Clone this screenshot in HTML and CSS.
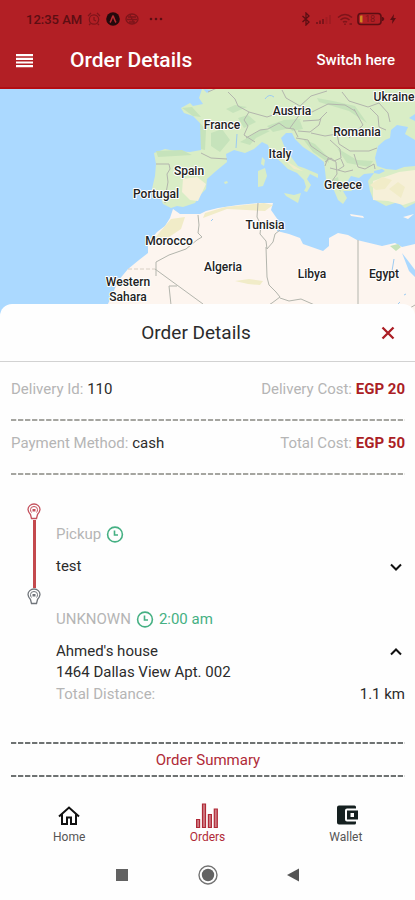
FILE: index.html
```html
<!DOCTYPE html>
<html lang="en">
<head>
  <meta charset="UTF-8" />
  <meta name="viewport" content="width=device-width, initial-scale=1" />
  <title>Order Details</title>
  <link rel="stylesheet" href="styles.css">
</head>
<body>

<div class="screen">
  <header class="header">
    <!-- phone status -->
    <div class="status">
      <div class="status-side">
        <span class="clock">12:35 AM</span>
        <svg class="faint" width="14" height="14" viewBox="0 0 14 14" fill="none" stroke="currentColor" stroke-width="1.2"><circle cx="7" cy="7.5" r="4.7"/><path d="M7 5v3l2 1M1 4l3-3M13 4l-3-3M3.500 11.500L2 13M10.500 11.500L12 13"/></svg>
        <svg width="14" height="14" viewBox="0 0 14 14"><circle cx="7" cy="7" r="6.800" fill="#24090c"/><path d="M4 10.500C5.500 8.500 6 5 7 4c1 1 1.500 4.500 3 6.500" fill="none" stroke="#b52b31" stroke-width="1.600"/></svg>
        <svg class="faint" width="14" height="14" viewBox="0 0 14 14" fill="none" stroke="currentColor" stroke-width="1.300"><ellipse cx="7" cy="7" rx="6" ry="5"/><path d="M3 5h8M2 7.500h10M4 10h6M5 3l4 8"/></svg>
        <svg class="more" width="16" height="14" viewBox="0 0 16 14" fill="currentColor"><circle cx="3" cy="7" r="1.300"/><circle cx="8" cy="7" r="1.300"/><circle cx="13" cy="7" r="1.300"/></svg>
      </div>
      <div class="status-side status-right">
        <svg width="10" height="14" viewBox="0 0 10 14" fill="none" stroke="currentColor" stroke-width="1.300"><path d="M1.500 4l6.500 6-3 3V1l3 3-6.500 6"/></svg>
        <svg class="faint" width="18" height="14" viewBox="0 0 18 14" fill="currentColor"><path d="M1 12V10h2v2zM4 12V8.500h2V12zM7 12V7h2v5z"/><path d="M10.500 12V5h2v7zM14 12V3h2v9z" opacity=".3"/></svg>
        <svg class="faint" width="16" height="14" viewBox="0 0 16 14" fill="none" stroke="currentColor" stroke-width="1.500"><path d="M1 5.500q7-6 14 0M3.500 8q4.500-4 9 0M6 10.200q2-1.600 4 0"/><path d="M12.500 12h2.500M8 11.500v1.500"/></svg>
        <svg width="28" height="14" viewBox="0 0 28 14"><rect x="1" y="1.500" width="23" height="11" rx="3" fill="none" stroke="#5c0e13" stroke-width="1.600"/><path d="M25.500 5v4l1.500-2z" fill="#5c0e13" stroke="#5c0e13"/><path d="M4 3.500h1.500v7H4q-1 0-1-1v-5q0-1 1-1z" fill="#cf8a22"/><text x="8" y="10" class="charge">18</text></svg>
        <svg width="8" height="14" viewBox="0 0 8 14" fill="currentColor"><path d="M5 2L1 8h2.500L3 12l4-6H4.500z"/></svg>
      </div>
    </div>

    <div class="toolbar">
      <button class="menu" type="button" aria-label="Menu">
        <svg width="18" height="14" viewBox="0 0 18 14" fill="#fff"><path d="M0 0h17v2.200H0zM0 3.700h17v2.200H0zM0 7.400h17v2.200H0zM0 11.100h17v2.200H0z"/></svg>
      </button>
      <h1>Order Details</h1>
      <a class="switch" href="#">Switch here</a>
    </div>
  </header>

  <!-- map -->
  <div class="map">
    <svg viewBox="0 88 415 227" preserveAspectRatio="xMidYMin slice">
      <!-- europe -->
      <path class="europe" d="M415 88H202L199 97 203 103 193 105 190 102 181 107 184 112 193 115 200 122 203 129 203 138 201 149 190 151 175 150 165 148 154 152 156 163 155 175 152 188 153 195 160 195 163 203 171 207 177 205 183 206 195 202 200 194 206 188 207 178 216 170 227 161 226 153 234 149 245 152 254 148 262 141 268 144 271 153 281 161 288 168 297 172 304 179 306 186 304 190 307 191 311 184 307 178 310 173 318 177 318 173 304 167 298 165 292 157 285 147 281 137 286 132 292 132 295 138 303 146 315 154 324 161 326 178 333 187 338 199 343 203 347 197 343 190 352 190 347 181 351 175 359 177 364 173 374 172 368 180 370 190 373 198 386 205 398 201 405 207 415 202z"/>
      <path class="europe" d="M262 156l3 3-1 6-3-2zM258 170l7-3 2 8-4 10-5 1zM284 192l10 2 7-2-3 10-12-7zM224 181l3-1 1 2-3 1z"/>
      <path class="land" d="M350 213l13 2 1 2-13-2zM403 216l11-3-6 5z"/>

      <!-- africa -->
      <path class="land" d="M107 305L113 292 118 280 128 268 139 259 148 252 148 242 157 231 165 225 170 217 173 208 180 213 200 213 206 210 218 207 238 204 258 202 273 202 271 209 278 219 277 230 289 233 300 237 303 243 323 250 329 245 329 237 338 232 348 234 357 239 382 245 395 242 402 246 415 243V316H107z"/>

      <!-- vegetation and dry ground -->
      <path class="forest" d="M182 107l10-1 9 10-8-1zM200 122l6 7-1 20-4-1zM211 132l11-4 8 11-10 12-9-6zM156 150l26-1 10 5-34 2zM226 108l9-4 12 2-14 6zM238 117l10-3 8 7-12 6zM247 137l15-9 8 2-14 7-6 7-10-3zM267 125l17-6 17-1-7 8-21 5zM288 123l12-3 3 8-11 2zM317 97l16 3 22 5 12 17-18-12-30-9zM303 138l12 5 12 12 2 7-16-11zM337 147l20 12 16 1-4 6-22-4zM333 178l5-2 3 15-6-5zM390 245l8-2 3 3-5 4z"/>
      <path class="dry" d="M183 178l14-2 9 7-8 17-8-1-8-8zM373 180l26-9 16-2v31l-12 4-15-4-15-1z"/>
      <path class="beach" d="M171 218l14-2-4 12-18 12-10-1zM205 212l20-6 39-4 9 2-8 6-38-2-24 9zM235 280l14-2 14 2-3 4-12-1zM279 154l12 9 12 7-9-2zM370 184l12-8 10 3-7 9-9 1zM389 188l9-7 7 5-4 11z"/>

      <!-- black sea, marmara, red sea -->
      <path class="water" d="M415 165L404 166 396 169 386 168 377 165 375 157 378 145 385 139 390 137 391 129 397 124 408 126 405 133 415 139zM374 170l8-2 3 2-6 3-5-1zM402 252l7 9 6 8v7l-6-6zM409 117l6-4v7zM203 88l8 1-4 3z"/>
      <path class="river" d="M236 147l1-14M211 220l2-2M404 294l2-1M397 304l3-3M392 270l2-12M265 98q4-6 9-2"/>

      <!-- borders -->
      <path class="border" d="M156 163h13l1 5-3 5 1 8-2 11-1 10M201 152l10 5 16 1M228 91l7 7 3 7 11 6-5 8 4 6-4 9 11 7M246 137l14-8 8-1 11-6 7 5 8 1 4 8M249 111l18 5 21-7 12 4-10 14M282 89l4 8 14 8 11-10 16-5M305 107l7 4 16-8 17 1 10 6M303 120l16-1 8-8M298 130l12 1 9-7 2-7M296 137l12 2 3 6 13 9 7 4M311 132l14 3 12-2 2 10 11 7 19 0 8-3M330 139l10 9 1 9-7 3-6-3-3 8M341 158l3 7-6 4-8-2M338 169l7 2 8-2M354 153l4 13 7 2 9-5 1 5M342 91l7 9 19 6 11-4 9 10 2 9M370 107l8 8 1 11 7 3M354 108l9 16-14 13M208 91l9-4M325 161l6-4 5 4 1 12-5 7"/>
      <path class="border" d="M198 214l1 10-1 8 4 4-5 3-11 9-17 6-13 7v14M155 268l48 35M177 285h-8l2 19M258 202l-1 14 4 8-1 9 6 7 1 8 6-7 2-8 5-4M266 246l1 30 2 8 7 7 4 5-8 6-5 3M280 297l9 3 12-2 16 7M358 239v66M415 304l-5 3"/>
      <path class="border disputed" d="M128 268h27"/>

      <g class="labels">
        <text x="222" y="128">France</text>
        <text x="292" y="114">Austria</text>
        <text x="394" y="100">Ukraine</text>
        <text x="357" y="135">Romania</text>
        <text x="280" y="157">Italy</text>
        <text x="189" y="174">Spain</text>
        <text x="343" y="188">Greece</text>
        <text x="156" y="197">Portugal</text>
        <text x="265" y="228">Tunisia</text>
        <text x="169" y="244">Morocco</text>
        <text x="223" y="270">Algeria</text>
        <text x="312" y="277">Libya</text>
        <text x="384" y="277">Egypt</text>
        <text x="128" y="285">Western</text>
        <text x="128" y="300">Sahara</text>
      </g>
    </svg>
  </div>

  <main class="sheet">
    <div class="sheet-head">
      <h2>Order Details</h2>
      <button class="close" type="button" aria-label="Close">
        <svg width="14" height="14" viewBox="0 0 14 14" fill="none" stroke="#ab1e25" stroke-width="2.300"><path d="M1.500 1.500l11 11M12.500 1.500l-11 11"/></svg>
      </button>
    </div>

    <div class="info">
      <p><span>Delivery Id:</span> 110</p>
      <p><span>Delivery Cost:</span> <b>EGP 20</b></p>
    </div>
    <div class="info">
      <p><span>Payment Method:</span> cash</p>
      <p><span>Total Cost:</span> <b>EGP 50</b></p>
    </div>

    <section class="route">
      <div class="track">
        <svg class="pin pin-start" width="14" height="17" viewBox="0 0 14 17" fill="none" stroke="currentColor"><path d="M4.500 15.500L3.500 11.500Q1 8.500 1 6.500a6 5.500 0 0 1 12 0q0 2-2.500 5l-1 4z" stroke-width="1.300"/><path d="M4.500 9.500q-1-1-1-3a3.500 3 0 0 1 7 0q0 2-1 3"/><path d="M5.500 6h3v2.500h-3z" fill="currentColor" stroke="none"/></svg>
        <div class="line"></div>
        <svg class="pin" width="14" height="17" viewBox="0 0 14 17" fill="none" stroke="currentColor"><path d="M4.500 15.500L3.500 11.500Q1 8.500 1 6.500a6 5.500 0 0 1 12 0q0 2-2.500 5l-1 4z" stroke-width="1.300"/><path d="M4.500 9.500q-1-1-1-3a3.500 3 0 0 1 7 0q0 2-1 3"/><path d="M5.500 6h3v2.500h-3z" fill="currentColor" stroke="none"/></svg>
      </div>

      <div class="stops">
        <div class="stop">
          <div class="stop-type">
            <span>Pickup</span>
            <svg width="18" height="18" viewBox="0 0 18 18" fill="none" stroke="#45b083" stroke-width="1.600"><circle cx="9" cy="8.500" r="7.400"/><path d="M8.500 4.500v4.500H12"/></svg>
          </div>
          <div class="stop-row">
            <p>test</p>
            <button class="arrow" type="button" aria-label="Show pickup details">
              <svg width="14" height="10" viewBox="0 0 14 10" fill="none" stroke="#111" stroke-width="2"><path d="M2 2.500l5 5 5-5"/></svg>
            </button>
          </div>
        </div>

        <div class="stop">
          <div class="stop-type">
            <span>UNKNOWN</span>
            <svg width="18" height="18" viewBox="0 0 18 18" fill="none" stroke="#45b083" stroke-width="1.600"><circle cx="9" cy="8.500" r="7.400"/><path d="M8.500 4.500v4.500H12"/></svg>
            <time>2:00 am</time>
          </div>
          <div class="stop-row">
            <p>Ahmed's house<br>1464 Dallas View Apt. 002</p>
            <button class="arrow" type="button" aria-label="Hide stop details">
              <svg width="14" height="10" viewBox="0 0 14 10" fill="none" stroke="#111" stroke-width="2"><path d="M2 7.500l5-5 5 5"/></svg>
            </button>
          </div>
          <div class="distance"><span>Total Distance:</span> 1.1 km</div>
        </div>
      </div>
    </section>

    <a class="summary" href="#">Order Summary</a>
  </main>

  <nav class="tabs">
    <a href="#">
      <svg width="24" height="26" viewBox="0 0 24 26" fill="none" stroke="#111" stroke-width="2"><path d="M2 14.500L12 5.500l10 9M5 12.500V22h5v-6.500h4V22h5v-9.500"/></svg>
      Home
    </a>
    <a class="active" href="#">
      <svg width="24" height="26" viewBox="0 0 24 26" fill="#cf7c84" stroke="#b02a37" stroke-width="1.200"><path d="M1.600 17.500h3v8h-3zM7.500 2h3v23.500h-3zM13.400 12.500h3v13h-3zM19.300 7h3v18.500h-3z"/></svg>
      Orders
    </a>
    <a href="#">
      <svg width="24" height="26" viewBox="0 0 24 26" fill="#152020"><path d="M22 6.500V5a1.500 1.500 0 0 0-1.500-1.500H5A2 2 0 0 0 3 5.500v15a2 2 0 0 0 2 2h15.500A1.500 1.500 0 0 0 22 21v-1.500H13a2 2 0 0 1-2-2v-9a2 2 0 0 1 2-2z"/><path d="M13 8.500h11v9H13zm3.500 2.500v4h3.500v-4z" fill-rule="evenodd"/></svg>
      Wallet
    </a>
  </nav>

  <!-- phone buttons -->
  <div class="softkeys">
    <button type="button" aria-label="Recent apps"><svg width="20" height="20" viewBox="0 0 20 20" fill="#626262"><path d="M4 4h12v12H4z"/></svg></button>
    <button type="button" aria-label="Home screen"><svg width="20" height="20" viewBox="0 0 20 20"><circle cx="10" cy="10" r="9" fill="none" stroke="#737373" stroke-width="1.400"/><circle cx="10" cy="10" r="6.200" fill="#626262"/></svg></button>
    <button type="button" aria-label="Back"><svg width="20" height="20" viewBox="0 0 20 20" fill="#555"><path d="M15 3.500v13L3 10z"/></svg></button>
  </div>
</div>

</body>
</html>
```
FILE: styles.css
```css
* {
  box-sizing: border-box;
}
body {
  margin: 0;
  font-family: Roboto, "Liberation Sans", sans-serif;
  font-size: 15px;
  line-height: 21px;
  color: #2b2b2b;
  background: #fefefe;
}
h1, h2, p {
  margin: 0;
}
a {
  color: inherit;
  text-decoration: none;
}
button {
  display: flex;
  align-items: center;
  justify-content: center;
  padding: 0;
  border: 0;
  background: none;
  color: inherit;
  cursor: pointer;
}
svg {
  display: block;
  flex-shrink: 0;
}
.screen {
  display: flex;
  flex-direction: column;
  min-height: 100vh;
}

/* header */
.header {
  background: #b21f25;
  border-bottom: 2px solid #b30d13;
  color: #fff;
}
.status {
  display: flex;
  justify-content: space-between;
  height: 36px;
  padding: 2px 18px 0 26px;
  color: #5c0e13;
}
.status-side {
  display: flex;
  align-items: center;
  gap: 5px;
}
.status-right {
  gap: 4px;
}
.clock {
  font-size: 13px;
  font-weight: 500;
}
.faint {
  opacity: .6;
}
.more {
  margin-left: 4px;
}
.charge {
  font-size: 9px;
  fill: #7a1519;
}
.toolbar {
  display: flex;
  align-items: center;
  height: 51px;
  padding: 0 20px 2px 16px;
}
.toolbar h1 {
  flex: 1;
  margin-left: 36px;
  font-size: 21px;
  font-weight: 500;
}
.switch {
  font-weight: 500;
}

/* map */
.map {
  height: 227px;
  background: #abd9ff;
  overflow: hidden;
}
.map svg {
  width: 100%;
  height: 100%;
}
.europe {
  fill: #d9edc6;
}
.land {
  fill: #fdf5ef;
}
.forest {
  fill: #c6e3bb;
}
.dry {
  fill: #f6f0d9;
}
.beach {
  fill: #f1ecc8;
}
.water {
  fill: #abd9ff;
}
.river {
  fill: none;
  stroke: #9ccbf2;
}
.border {
  fill: none;
  stroke: #b3b5ad;
}
.disputed {
  stroke-dasharray: 4 2;
  stroke: #d8cfc4;
}
.labels {
  font-size: 12px;
  font-weight: 500;
  text-anchor: middle;
  fill: #222;
  stroke: #fff;
  stroke-width: 2px;
  stroke-linejoin: round;
  paint-order: stroke;
}

/* order sheet */
.sheet {
  position: relative;
  margin-top: -12px;
  border-radius: 12px 12px 0 0;
  background: #fefefe;
}
.sheet-head {
  display: flex;
  align-items: center;
  height: 58px;
  padding: 0 7px 0 24px;
  border-bottom: 1px solid #d2d2d2;
}
.sheet-head h2 {
  flex: 1;
  font-size: 19px;
  font-weight: 400;
  text-align: center;
}
.close {
  width: 40px;
  height: 40px;
}
.info {
  display: flex;
  justify-content: space-between;
  margin: 0 10px 0 11px;
  padding: 12px 0 21px;
}
.sheet-head + .info {
  padding-top: 17px;
}
.info span,
.stop-type span,
.distance span {
  color: #b5b5b5;
}
.info b {
  font-weight: 700;
  color: #ab1e25;
}

/* dashed rules */
.info,
.summary {
  background-image: linear-gradient(90deg, #a5a5a0 5px, transparent 5px);
  background-position: left bottom;
  background-repeat: round no-repeat;
  background-size: 7px 2px;
}
.summary {
  background-image: linear-gradient(90deg, #6e7272 5px, transparent 5px), linear-gradient(90deg, #6e7272 5px, transparent 5px);
  background-position: left top, left bottom;
}

.route {
  display: flex;
  gap: 15px;
  padding: 28px 10px 0 27px;
}
.track {
  display: flex;
  flex-direction: column;
  align-items: center;
  height: 102px;
}
.pin {
  color: #70757b;
}
.pin-start {
  color: #c4505c;
}
.line {
  flex: 1;
  width: 3px;
  background: #c4494d;
}
.stops {
  flex: 1;
  padding-top: 21px;
}
.stop {
  margin-bottom: 32px;
}
.stop-type {
  display: flex;
  align-items: center;
  gap: 5px;
  margin-bottom: 11px;
}
.stop-type time {
  color: #45b083;
}
.stop-row {
  display: flex;
  justify-content: space-between;
  align-items: flex-start;
}
.arrow {
  width: 18px;
  height: 21px;
}
.distance {
  display: flex;
  justify-content: space-between;
  margin-top: 1px;
}
.summary {
  display: block;
  margin: 5px 10px 0 11px;
  padding: 8px 0 6px;
  text-align: center;
  color: #b02a37;
}

/* bottom bar */
.tabs {
  display: grid;
  grid-template-columns: repeat(3, 1fr);
  margin-top: 25px;
  font-size: 12px;
  line-height: 16px;
  color: #555;
}
.tabs a {
  display: flex;
  flex-direction: column;
  align-items: center;
}
.tabs svg {
  margin-bottom: 1px;
}
.tabs .active {
  color: #b02a37;
}
.softkeys {
  display: flex;
  justify-content: center;
  gap: 66px;
  margin-top: 20px;
}
```
